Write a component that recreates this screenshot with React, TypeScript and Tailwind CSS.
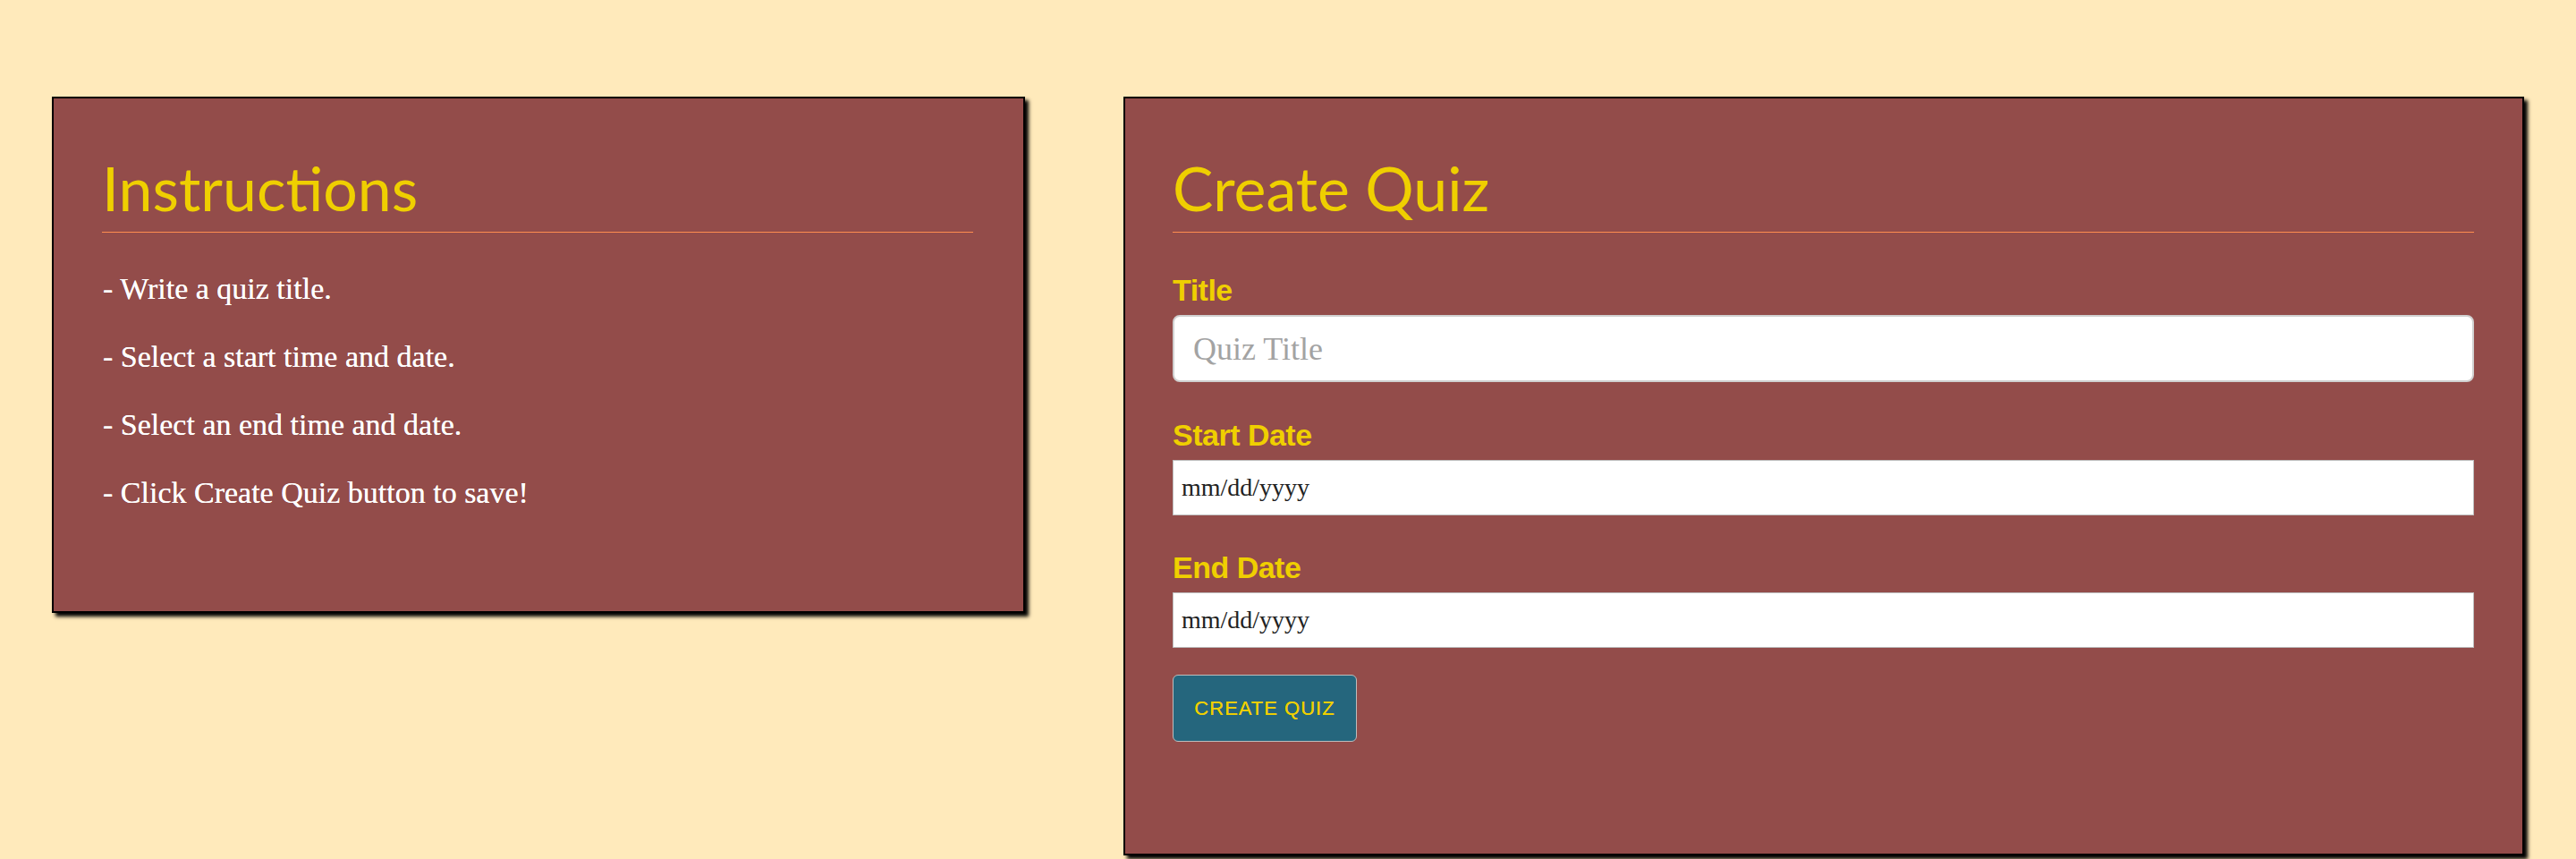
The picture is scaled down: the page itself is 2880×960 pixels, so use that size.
const STEPS = [
  "- Write a quiz title.",
  "- Select a start time and date.",
  "- Select an end time and date.",
  "- Click Create Quiz button to save!",
];

function Heading({ children }: { children: string }) {
  return (
    <>
      <h1 className="font-['Lato',sans-serif] text-[68px] leading-[68px] font-normal text-[#efcf00]">
        {children}
      </h1>
      <div className="mt-[15px] h-px bg-[#ff8c4f]" />
    </>
  );
}

function Label({ children }: { children: string }) {
  return (
    <label className="block font-['Liberation_Sans',sans-serif] text-[34px] leading-[34px] font-bold tracking-[-0.5px] text-[#efcf00]">
      {children}
    </label>
  );
}

const dateInput =
  "mt-[11px] h-[62px] w-full border border-[#bdbdbd] bg-white pl-[9px] font-['Liberation_Serif',serif] text-[28px] text-[#222] outline-none";

export default function App() {
  return (
    <div className="flex min-h-screen items-start gap-[110px] bg-[#ffeabb] pl-[58px] pt-[108px]">
      <section className="h-[577px] w-[1088px] shrink-0 border-2 border-black bg-[#934c4a] pl-[54px] pr-[56px] pt-[66px] shadow-[4px_4px_4px_#000]">
        <Heading>Instructions</Heading>
        <ul className="mt-[46px] flex flex-col gap-[42px] pl-px font-['Liberation_Serif',serif] text-[34px] leading-[34px] text-white [text-shadow:0_0_0.6px_#fff]">
          {STEPS.map((s) => (
            <li key={s}>{s}</li>
          ))}
        </ul>
      </section>

      <section className="h-[848px] w-[1566px] shrink-0 border-2 border-black bg-[#934c4a] pl-[53px] pr-[54px] pt-[66px] shadow-[4px_4px_4px_#000]">
        <Heading>Create Quiz</Heading>
        <form className="flex flex-col" onSubmit={(e) => e.preventDefault()}>
          <div className="mt-[47px]">
            <Label>Title</Label>
          </div>
          <input
            type="text"
            placeholder="Quiz Title"
            className="mt-[11px] h-[75px] w-full rounded-[8px] border-2 border-[#d0d0d0] bg-white px-[21px] font-['Liberation_Serif',serif] text-[36px] text-[#333] placeholder:text-[#a3a3a3] outline-none"
          />
          <div className="mt-[42px]">
            <Label>Start Date</Label>
          </div>
          <input type="text" readOnly defaultValue="mm/dd/yyyy" className={dateInput} />
          <div className="mt-[41px]">
            <Label>End Date</Label>
          </div>
          <input type="text" readOnly defaultValue="mm/dd/yyyy" className={dateInput} />
          <div className="mt-[30px]">
            <button
              type="submit"
              className="flex h-[75px] w-[206px] items-center justify-center rounded-[6px] border border-[#bdbdbd] bg-[#25667d] font-['Liberation_Sans',sans-serif] text-[22px] tracking-[1px] text-[#efcf00] [text-shadow:0_0_0.5px_#efcf00]"
            >
              CREATE QUIZ
            </button>
          </div>
        </form>
      </section>
    </div>
  );
}
